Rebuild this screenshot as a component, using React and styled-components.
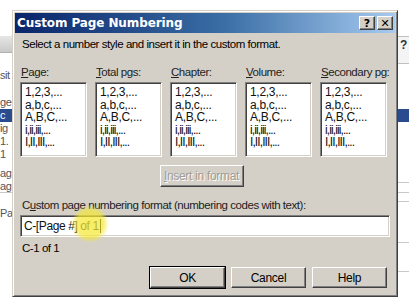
import React from "react";
import styled, { createGlobalStyle } from "styled-components";

const GlobalStyle = createGlobalStyle`
  html, body {
    margin: 0;
    padding: 0;
    background: #ffffff;
    overflow: hidden;
  }
  * {
    box-sizing: border-box;
  }
`;

const Desktop = styled.div`
  position: relative;
  width: 409px;
  height: 308px;
  overflow: hidden;
  background: #ffffff;
  font-family: "Liberation Sans", Arial, sans-serif;
  font-size: 11.5px;
  letter-spacing: -0.45px;
  color: #000;
`;

// window behind the dialog, only its edges show
const BackWindow = styled.div`
  position: absolute;
  top: 36px;
  left: -40px;
  width: 500px;
  height: 250px;
  display: flex;
  flex-direction: column;
`;

const BackToolbar = styled.div`
  height: 17px;
  background: linear-gradient(#e6e6e6, #c9c9c9);
  border-bottom: 1px solid #b0b0b0;
`;

const BackList = styled.div`
  display: flex;
  flex-direction: column;
  padding-top: 4px;
  padding-left: 40px;
  font-size: 11px;
  color: #555;
`;

const BackItem = styled.div`
  height: ${(p) => p.$h || 13}px;
  line-height: ${(p) => p.$h || 13}px;
  overflow: hidden;
  padding-left: ${(p) => p.$indent || 0}px;
  background: ${(p) => (p.$selected ? "#2a4b8d" : "transparent")};
  color: ${(p) => (p.$selected ? "#fff" : "#555")};
  border-bottom: ${(p) => (p.$rule ? "1px solid #c8c8c8" : "none")};
`;

const BackRight = styled.div`
  position: absolute;
  top: 36px;
  left: 398px;
  width: 20px;
  height: 250px;
  display: flex;
  flex-direction: column;
`;

const BackRightBar = styled.div`
  height: 28px;
  border-top: 1px solid #c0c0c0;
  border-bottom: 1px solid #c0c0c0;
  background: #f4f4f4;
  font-weight: bold;
  font-size: 12px;
  color: #333;
  padding-left: 2px;
  line-height: 16px;
`;

const BackRightLine = styled.div`
  margin-top: ${(p) => p.$top}px;
  height: 1px;
  background: #c8c8c8;
`;

const Dialog = styled.div`
  position: absolute;
  top: 10px;
  left: 12px;
  width: 386px;
  height: 287px;
  background: #d4d0c8;
  border-top: 1px solid #d4d0c8;
  border-left: 1px solid #d4d0c8;
  border-right: 1px solid #404040;
  border-bottom: 1px solid #404040;
  box-shadow: inset 1px 1px 0 #ffffff, inset -1px -1px 0 #808080;
  padding: 2px;
  display: flex;
  flex-direction: column;
`;

const TitleBar = styled.div`
  height: 20px;
  background: linear-gradient(to right, #0a246a, #3a6ea5 55%, #a6caf0);
  display: flex;
  align-items: center;
  justify-content: space-between;
  padding: 0 2px 0 2px;
`;

const TitleText = styled.span`
  color: #ffffff;
  font-family: "DejaVu Sans", Verdana, sans-serif;
  font-weight: bold;
  font-size: 12px;
  letter-spacing: -0.1px;
`;

const TitleButtons = styled.div`
  display: flex;
  gap: 2px;
`;

const CaptionButton = styled.div`
  width: 16px;
  height: 14px;
  background: #d4d0c8;
  border-top: 1px solid #ffffff;
  border-left: 1px solid #ffffff;
  border-right: 1px solid #404040;
  border-bottom: 1px solid #404040;
  box-shadow: inset -1px -1px 0 #808080;
  display: flex;
  align-items: center;
  justify-content: center;
  font-family: "DejaVu Sans", sans-serif;
  font-weight: bold;
  font-size: 11px;
  letter-spacing: 0;
  line-height: 1;
  color: #000;
`;

const Body = styled.div`
  flex: 1;
  display: flex;
  flex-direction: column;
  padding: 4px 7px 0 5px;
`;

const Intro = styled.div`
  padding-left: 2px;
  height: 14px;
  line-height: 14px;
  margin-bottom: 15px;
`;

const Columns = styled.div`
  display: grid;
  grid-template-columns: repeat(5, 67px);
  column-gap: 8px;
`;

const Column = styled.div`
  display: flex;
  flex-direction: column;
`;

const Label = styled.div`
  padding-left: 1px;
  height: 13px;
  line-height: 13px;
  margin-bottom: 3px;
  color: #222;
  white-space: nowrap;
`;

const Key = styled.span`
  text-decoration: underline;
`;

const ListBox = styled.div`
  height: 75px;
  background: #ffffff;
  border-top: 1px solid #808080;
  border-left: 1px solid #808080;
  border-right: 1px solid #ffffff;
  border-bottom: 1px solid #ffffff;
  box-shadow: inset 1px 1px 0 #404040, inset -1px -1px 0 #d4d0c8;
  padding: 3px 0 0 4px;
  display: flex;
  flex-direction: column;
`;

const ListItem = styled.div`
  height: 12.5px;
  line-height: 12.5px;
  font-size: 12px;
  color: #111;
  letter-spacing: ${(p) => (p.$tight ? "-0.9px" : "-0.3px")};
`;

const Center = styled.div`
  display: flex;
  justify-content: center;
  margin-top: 8px;
  padding-right: 5px;
`;

const Button = styled.button`
  width: ${(p) => p.$w || 75}px;
  height: ${(p) => p.$h || 21}px;
  background: #d4d0c8;
  font-family: "Liberation Sans", Arial, sans-serif;
  font-size: 12px;
  letter-spacing: -0.3px;
  color: ${(p) => (p.disabled ? "#a09c94" : "#000")};
  text-shadow: ${(p) => (p.disabled ? "1px 1px 0 #ffffff" : "none")};
  padding: 0;
  border-top: 1px solid #ffffff;
  border-left: 1px solid #ffffff;
  border-right: 1px solid #404040;
  border-bottom: 1px solid #404040;
  box-shadow: inset -1px -1px 0 #808080;
  outline: ${(p) => (p.$default ? "1px solid #000" : "none")};
  outline-offset: 0;
  cursor: default;
`;

const FormatLabel = styled.div`
  margin-top: 11px;
  padding-left: 2px;
  height: 14px;
  line-height: 14px;
  color: #222;
`;

const InputBox = styled.div`
  position: relative;
  margin-top: 3px;
  width: 370px;
  height: 22px;
  background: #ffffff;
  border-top: 1px solid #808080;
  border-left: 1px solid #808080;
  border-right: 1px solid #ffffff;
  border-bottom: 1px solid #ffffff;
  box-shadow: inset 1px 1px 0 #404040, inset -1px -1px 0 #d4d0c8;
  display: flex;
  align-items: center;
  padding-left: 3px;
`;

const InputText = styled.span`
  font-size: 12px;
  letter-spacing: -0.4px;
  color: #111;
`;

const Caret = styled.span`
  display: inline-block;
  width: 1px;
  height: 14px;
  background: #000;
  vertical-align: -3px;
  margin-left: 1px;
`;

// yellow cursor highlight from the screen recorder
const Highlight = styled.div`
  position: absolute;
  left: 50px;
  top: -11px;
  width: 38px;
  height: 38px;
  border-radius: 50%;
  background: radial-gradient(
    circle,
    rgba(245, 232, 50, 0.78) 0%,
    rgba(245, 232, 50, 0.68) 50%,
    rgba(245, 240, 110, 0) 71%
  );
  pointer-events: none;
`;

const Preview = styled.div`
  margin-top: 4px;
  padding-left: 2px;
  height: 14px;
  line-height: 14px;
`;

const ButtonRow = styled.div`
  display: flex;
  justify-content: flex-end;
  gap: 6px;
  margin-top: 12px;
  padding-right: 1px;
`;

const columns = [
  { key: "P", rest: "age:" },
  { key: "T", rest: "otal pgs:" },
  { key: "C", rest: "hapter:" },
  { key: "V", rest: "olume:" },
  { key: "S", rest: "econdary pg:" },
];

const styles = ["1,2,3,...", "a,b,c,...", "A,B,C,...", "i,ii,iii,...", "I,II,III,..."];

export default function App() {
  return (
    <>
      <GlobalStyle />
      <Desktop>
        <BackWindow>
          <BackToolbar />
          <BackList>
            <BackItem $h={12} />
            <BackItem $indent={-2}>sit</BackItem>
            <BackItem $h={14} />
            <BackItem>ge</BackItem>
            <BackItem $selected>c</BackItem>
            <BackItem>ig</BackItem>
            <BackItem>1.</BackItem>
            <BackItem>1</BackItem>
            <BackItem $h={6} />
            <BackItem $h={13}>ag</BackItem>
            <BackItem $h={13} $rule>ag</BackItem>
            <BackItem $h={14} />
            <BackItem>Pa</BackItem>
          </BackList>
        </BackWindow>
        <BackRight>
          <BackRightBar>?</BackRightBar>
          <BackRightLine $top={118} />
          <BackRightLine $top={18} />
          <BackRightLine $top={40} />
          <BackRightLine $top={28} />
        </BackRight>

        <Dialog>
          <TitleBar>
            <TitleText>Custom Page Numbering</TitleText>
            <TitleButtons>
              <CaptionButton>?</CaptionButton>
              <CaptionButton>✕</CaptionButton>
            </TitleButtons>
          </TitleBar>
          <Body>
            <Intro>Select a number style and insert it in the custom format.</Intro>
            <Columns>
              {columns.map((c) => (
                <Column key={c.key}>
                  <Label>
                    <Key>{c.key}</Key>
                    {c.rest}
                  </Label>
                  <ListBox>
                    {styles.map((s, i) => (
                      <ListItem key={s} $tight={i >= 3}>
                        {s}
                      </ListItem>
                    ))}
                  </ListBox>
                </Column>
              ))}
            </Columns>
            <Center>
              <Button disabled $w={84} $h={22}>
                <Key>I</Key>nsert in format
              </Button>
            </Center>
            <FormatLabel>
              C<Key>u</Key>stom page numbering format (numbering codes with text):
            </FormatLabel>
            <InputBox>
              <InputText>
                C-[Page #] of 1<Caret />
              </InputText>
              <Highlight />
            </InputBox>
            <Preview>C-1 of 1</Preview>
            <ButtonRow>
              <Button $default>OK</Button>
              <Button>Cancel</Button>
              <Button>Help</Button>
            </ButtonRow>
          </Body>
        </Dialog>
      </Desktop>
    </>
  );
}
